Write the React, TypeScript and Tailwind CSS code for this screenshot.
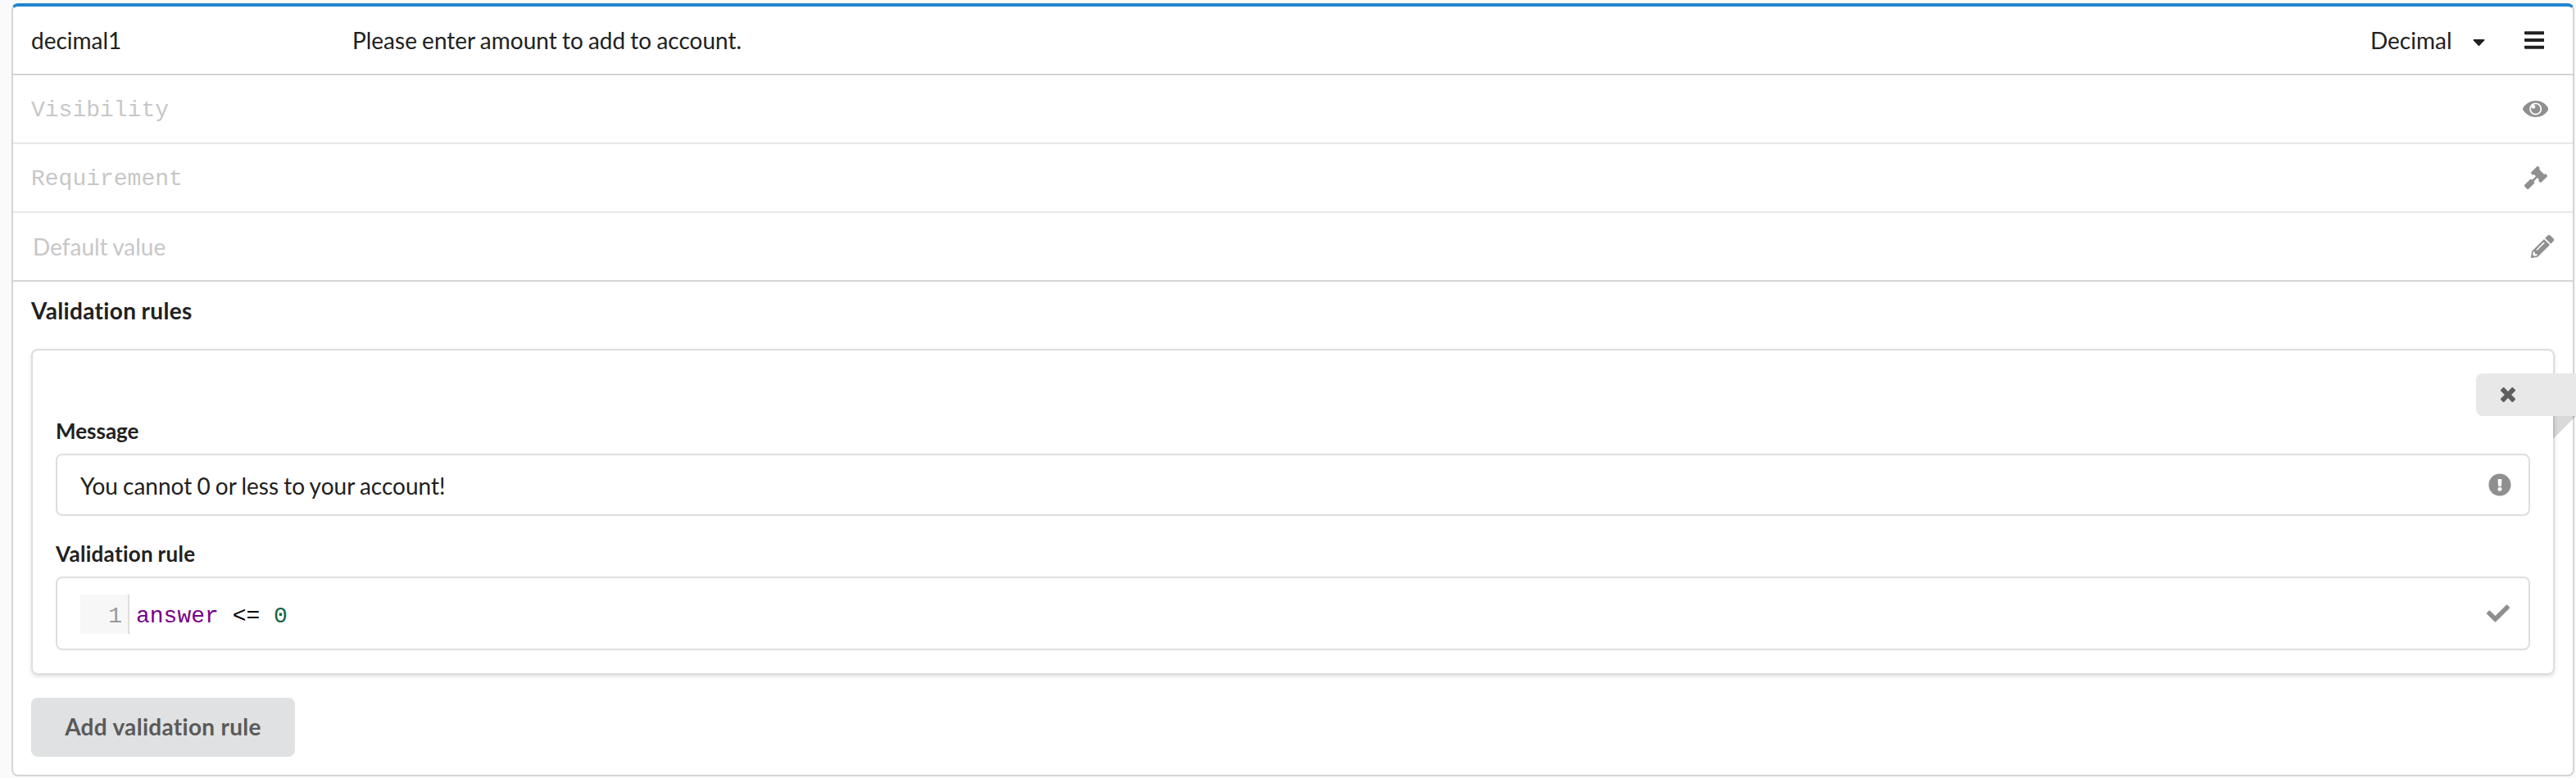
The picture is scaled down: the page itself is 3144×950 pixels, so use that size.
import React from "react";
import {
  FaBars,
  FaCaretDown,
  FaCheck,
  FaExclamationCircle,
  FaGavel,
  FaPencilAlt,
} from "react-icons/fa";

function EyeIcon({ className }: { className?: string }) {
  return (
    <svg viewBox="0 0 576 512" fill="currentColor" className={className} aria-hidden="true">
      <path d="M569.354 231.631C512.97 135.949 407.81 72 288 72 168.14 72 63.004 135.994 6.646 231.631a47.999 47.999 0 0 0 0 48.739C63.031 376.051 168.19 440 288 440c119.86 0 224.996-63.994 281.354-159.631a47.997 47.997 0 0 0 0-48.738zM288 392c-75.162 0-136-60.827-136-136 0-75.162 60.826-136 136-136 75.162 0 136 60.826 136 136 0 75.162-60.826 136-136 136zm104-136c0 57.438-46.562 104-104 104s-104-46.562-104-104c0-17.708 4.431-34.379 12.236-48.973l-.001.032c0 23.651 19.173 42.823 42.824 42.823s42.824-19.173 42.824-42.823c0-23.651-19.173-42.824-42.824-42.824l-.032.001C253.621 156.431 270.292 152 288 152c57.438 0 104 46.562 104 104z" />
    </svg>
  );
}

function TimesIcon({ className }: { className?: string }) {
  return (
    <svg viewBox="0 0 384 512" fill="currentColor" className={className} aria-hidden="true">
      <path d="M323.1 441l53.9-53.9c9.4-9.4 9.4-24.5 0-33.9L279.8 256l97.2-97.2c9.4-9.4 9.4-24.5 0-33.9L323.1 71c-9.4-9.4-24.5-9.4-33.9 0L192 168.2 94.8 71c-9.4-9.4-24.5-9.4-33.9 0L7 124.9c-9.4 9.4-9.4 24.5 0 33.9l97.2 97.2L7 353.2c-9.4 9.4-9.4 24.5 0 33.9L60.9 441c9.4 9.4 24.5 9.4 33.9 0l97.2-97.2 97.2 97.2c9.3 9.3 24.5 9.3 33.9 0z" />
    </svg>
  );
}

function Header() {
  return (
    <div className="flex h-[84px] items-center border-b-2 border-[#d4d4d5] pl-[22px] pr-[35px]">
      <span className="w-[392px]">decimal1</span>
      <span className="flex-1">Please enter amount to add to account.</span>
      <span>Decimal</span>
      <FaCaretDown className="ml-[25px] mt-1 h-6 w-[15px]" />
      <FaBars className="ml-[48px] h-7 w-[24.5px]" />
    </div>
  );
}

function ValidationCard() {
  return (
    <div className="mx-[22px] mt-[19px] flex h-[398px] flex-col rounded-lg border-2 border-[#dededf] px-7 pt-7 shadow-[0_2px_4px_0_rgba(34,36,38,0.15)]">
      <div className="relative -mr-14 flex h-[52px] w-[122px] items-center self-end rounded-l-lg bg-[#e8e8e8] pl-[30px] text-[#5f5f5f]">
        <TimesIcon className="h-6 w-[18px]" />
        <svg
          viewBox="0 0 28 28"
          className="absolute left-[94px] top-[52px] size-7 text-black/15"
          fill="currentColor"
          aria-hidden="true"
        >
          <path d="M0 0H28L0 28Z" />
        </svg>
      </div>
      <label className="flex h-[36px] items-center text-[26px] font-bold">Message</label>
      <div className="mt-[10px] flex h-[76px] items-center justify-between rounded-lg border-2 border-[#dededf] pl-7 pr-[21.5px]">
        <span className="pt-0.5">You cannot 0 or less to your account!</span>
        <FaExclamationCircle className="size-7 text-[#8f8f8f]" />
      </div>
      <label className="mt-7 flex h-[36px] items-center text-[26px] font-bold tracking-[0.3px]">
        Validation rule
      </label>
      <div className="mt-[10px] flex h-[90px] items-center justify-between rounded-lg border-2 border-[#dededf] pl-7 pr-[23px]">
        <div className="flex h-12 items-center pt-0.5 font-['Liberation_Mono',monospace] [word-spacing:0]">
          <span className="flex h-12 w-[60px] items-center justify-end border-r-2 border-[#dddddd] bg-[#f7f7f7] pr-[7px] pt-1.5 text-[#999999]">
            1
          </span>
          <code className="whitespace-pre pl-2 pt-1.5 font-['Liberation_Mono',monospace] text-black">
            <span className="text-[#770088]">answer</span> {"<="}{" "}
            <span className="text-[#116644]">0</span>
          </code>
        </div>
        <FaCheck className="size-7 text-[#8f8f8f]" />
      </div>
    </div>
  );
}

export default function App() {
  return (
    <div className="h-[950px] w-[3144px] overflow-hidden bg-[#fafafa] pl-[14px] pt-1 font-['Lato',sans-serif] text-[28px] leading-[40px] text-[#212121] [font-variant-ligatures:none] [word-spacing:-1px]">
      <div className="h-[944px] w-[3128px] rounded-lg border-2 border-t-4 border-[#d4d4d5] border-t-[#2185d0] bg-white">
        <Header />
        <div className="flex h-[84px] items-center justify-between border-b-2 border-[#e8e8e9] pl-[22px] pr-[30px] text-[#c7c7c7]">
          <span className="pt-1 font-['Liberation_Mono',monospace]">Visibility</span>
          <EyeIcon className="h-7 w-[31.5px] text-[#8f8f8f]" />
        </div>
        <div className="flex h-[84px] items-center justify-between border-b-2 border-[#e8e8e9] pl-[22px] pr-[31px] text-[#c7c7c7]">
          <span className="pt-1 font-['Liberation_Mono',monospace]">Requirement</span>
          <FaGavel className="size-7 text-[#8f8f8f]" />
        </div>
        <div className="flex h-[84px] items-center justify-between border-b-2 border-[#d4d4d5] pl-6 pr-[23px] text-[#c7c7c7]">
          <span>Default value</span>
          <FaPencilAlt className="size-7 text-[#8f8f8f]" />
        </div>
        <h3 className="ml-[22px] mt-[15px] h-12 font-bold tracking-[0.35px]">Validation rules</h3>
        <ValidationCard />
        <button className="ml-[22px] mt-7 h-[72px] w-[322px] rounded-lg bg-[#e0e1e2] pb-0.5 font-bold tracking-[0.3px] text-[#5a5a5a]">
          Add validation rule
        </button>
      </div>
    </div>
  );
}
